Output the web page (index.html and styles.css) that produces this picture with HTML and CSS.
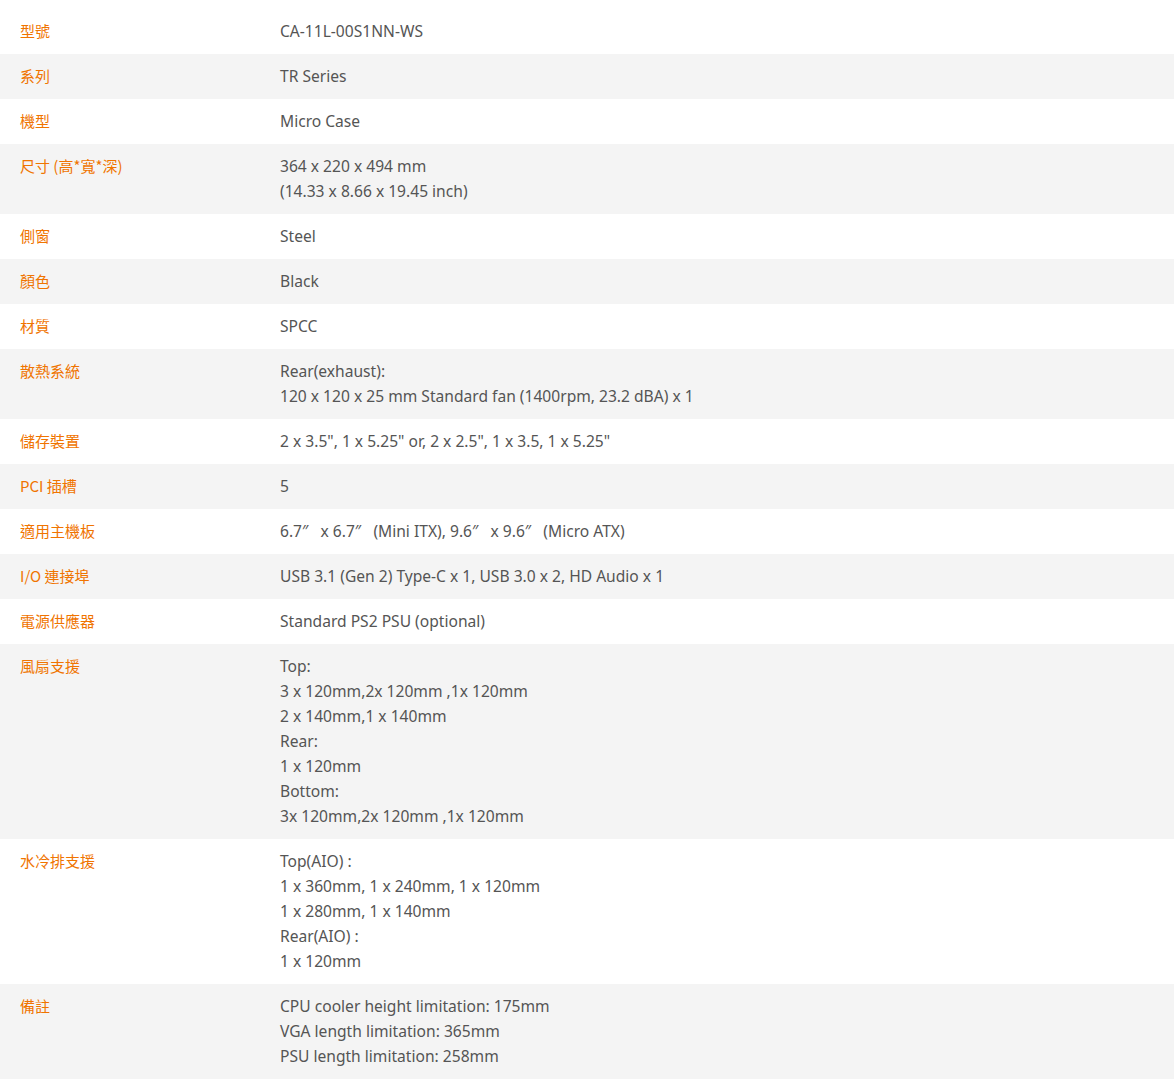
FILE: index.html
```html
<!DOCTYPE html>
<html lang="zh-Hant">
<head>
<meta charset="utf-8">
<title>規格</title>
<link rel="stylesheet" href="styles.css">
</head>
<body>
<table class="spec">
<tbody>
<tr><th>型號</th><td>CA-11L-00S1NN-WS</td></tr>
<tr><th>系列</th><td>TR Series</td></tr>
<tr><th>機型</th><td>Micro Case</td></tr>
<tr><th>尺寸 (高*寬*深)</th><td>364 x 220 x 494 mm<br>(14.33 x 8.66 x 19.45 inch)</td></tr>
<tr><th>側窗</th><td>Steel</td></tr>
<tr><th>顏色</th><td>Black</td></tr>
<tr><th>材質</th><td>SPCC</td></tr>
<tr><th>散熱系統</th><td>Rear(exhaust):<br>120 x 120 x 25 mm Standard fan (1400rpm, 23.2 dBA) x 1</td></tr>
<tr><th>儲存裝置</th><td>2 x 3.5", 1 x 5.25" or, 2 x 2.5", 1 x 3.5, 1 x 5.25"</td></tr>
<tr><th>PCI 插槽</th><td>5</td></tr>
<tr><th>適用主機板</th><td>6.7″&nbsp;&nbsp; x 6.7″&nbsp;&nbsp; (Mini ITX), 9.6″&nbsp;&nbsp; x 9.6″&nbsp;&nbsp; (Micro ATX)</td></tr>
<tr><th>I/O 連接埠</th><td>USB 3.1 (Gen 2) Type-C x 1, USB 3.0 x 2, HD Audio x 1</td></tr>
<tr><th>電源供應器</th><td>Standard PS2 PSU (optional)</td></tr>
<tr><th>風扇支援</th><td>Top:<br>3 x 120mm,2x 120mm ,1x 120mm<br>2 x 140mm,1 x 140mm<br>Rear:<br>1 x 120mm<br>Bottom:<br>3x 120mm,2x 120mm ,1x 120mm</td></tr>
<tr><th>水冷排支援</th><td>Top(AIO) :<br>1 x 360mm, 1 x 240mm, 1 x 120mm<br>1 x 280mm, 1 x 140mm<br>Rear(AIO) :<br>1 x 120mm</td></tr>
<tr><th>備註</th><td>CPU cooler height limitation: 175mm<br>VGA length limitation: 365mm<br>PSU length limitation: 258mm</td></tr>
</tbody>
</table>
</body>
</html>
```

FILE: styles.css
```css
html, body {
  margin: 0;
  padding: 0;
  background: #fff;
}

body {
  padding-top: 9px;
  font-family: "Noto Sans", "Noto Sans CJK TC", sans-serif;
  font-size: 15.6px;
  line-height: 25px;
  color: #555;
}

.spec {
  width: 100%;
  border-collapse: collapse;
  border-spacing: 0;
}

.spec tr:nth-child(even) {
  background: #f4f4f4;
}

.spec th,
.spec td {
  padding: 10px 0;
  height: 25px;
  vertical-align: top;
  text-align: left;
  font-weight: normal;
}

.spec th {
  width: 260px;
  padding: 9px 0 11px 20px;
  color: #f07400;
  font-size: 15px;
  font-family: "Noto Sans CJK TC", "Noto Sans", sans-serif;
}

.spec td {
  padding-right: 20px;
}
```
